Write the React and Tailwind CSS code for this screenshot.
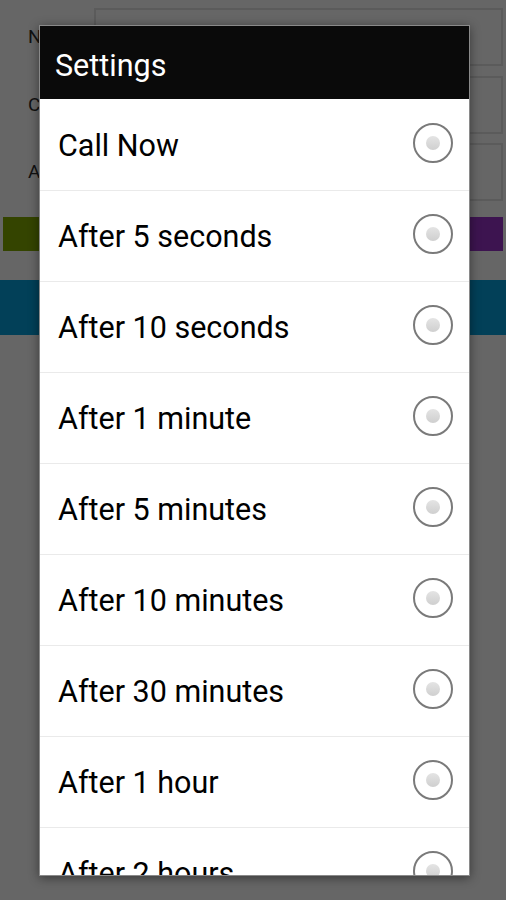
const options = [
  "Call Now",
  "After 5 seconds",
  "After 10 seconds",
  "After 1 minute",
  "After 5 minutes",
  "After 10 minutes",
  "After 30 minutes",
  "After 1 hour",
  "After 2 hours",
];

function Radio() {
  return (
    <div className="w-10 h-10 rounded-full border-2 border-[#7a7a7a] flex items-center justify-center shrink-0">
      <div className="w-[14px] h-[14px] rounded-full bg-gradient-to-b from-[#e4e4e4] to-[#cfcfcf]" />
    </div>
  );
}

export default function App() {
  return (
    <div
      className="relative w-[506px] h-[900px] overflow-hidden bg-[#666666]"
      style={{ fontFamily: "Roboto, 'Liberation Sans', sans-serif" }}
    >
      {/* page behind the dialog (dimmed) */}
      <div className="pt-2 flex flex-col">
        <div className="flex items-center h-[58px] pr-[3px]">
          <span className="w-[94px] pl-7 text-[19px] text-[#111]">Name</span>
          <div className="flex-1 h-full border-2 border-[#5b5b5b] px-3 flex items-center text-[25px] text-[#1a1a1a]">
            Donald Trump
          </div>
        </div>
        <div className="flex items-center h-[58px] mt-[10px] pr-[3px]">
          <span className="w-[94px] pl-7 text-[19px] text-[#111]">Call</span>
          <div className="flex-1 h-full border-2 border-[#5b5b5b]" />
        </div>
        <div className="flex items-center h-[58px] mt-[9px] pr-[3px]">
          <span className="w-[94px] pl-7 text-[19px] text-[#111]">At</span>
          <div className="flex-1 h-full border-2 border-[#5b5b5b]" />
        </div>
        <div className="flex gap-1 px-[3px] mt-4 h-[34px]">
          <div className="flex-1 bg-[#344400]" />
          <div className="flex-1 bg-[#3d1450]" />
        </div>
        <div className="mt-[29px] h-[55px] bg-[#024058]" />
      </div>

      {/* dialog */}
      <div className="absolute left-[39px] top-[25px] w-[431px] h-[851px] border border-[#8a8a8a] bg-white shadow-[0_2px_10px_rgba(0,0,0,0.45)] overflow-hidden flex flex-col">
        <div className="h-[73px] shrink-0 bg-[#0a0a0a] flex items-center pl-[15px] pt-[8px]">
          <span className="text-white text-[30.5px] leading-none">Settings</span>
        </div>
        {options.map((label, i) => (
          <div
            key={label}
            className={`h-[91px] shrink-0 flex items-center justify-between pl-[18px] pr-[16px] ${
              i > 0 ? "border-t border-[#eaeaea]" : ""
            }`}
          >
            <span className="text-[30.5px] leading-none text-black mt-[3px]">{label}</span>
            <div className="-mt-1">
              <Radio />
            </div>
          </div>
        ))}
      </div>
    </div>
  );
}
